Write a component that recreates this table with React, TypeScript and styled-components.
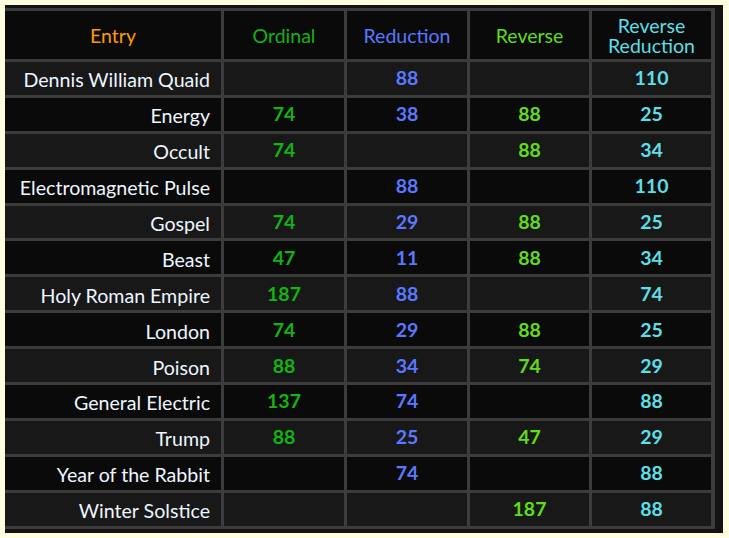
import styled, { createGlobalStyle } from "styled-components";

const GlobalStyle = createGlobalStyle`
  html, body {
    margin: 0;
    padding: 0;
    background-color: #ffffe0;
  }
  body {
    padding: 5px;
    font-family: Lato, "Open Sans", sans-serif;
  }
`;

const Panel = styled.div`
  width: 718px;
  height: 528px;
  box-sizing: border-box;
  background-color: #131313;
  padding: 3px 8px 5px 0;
`;

const Grid = styled.div`
  display: grid;
  grid-template-columns: 216px 120px 120px 119px 119px;
  grid-template-rows: 48px;
  grid-auto-rows: 32.9px;
  gap: 3px;
  padding: 3px 3px 3px 0;
  background-color: #3c3c3c;
`;

const COLORS = ["#ff9a00", "#13b313", "#5a78ff", "#5fdd1c", "#5ddfe6"];

const HeadCell = styled.div<{ $color: string }>`
  display: flex;
  align-items: center;
  justify-content: center;
  padding-top: 2px;
  text-align: center;
  background-color: #0a0a0a;
  color: ${(p) => p.$color};
  font-size: 19.5px;
  line-height: 20px;
`;

const NameCell = styled.div<{ $odd: boolean }>`
  display: flex;
  align-items: center;
  justify-content: flex-end;
  padding: 3px 11px 0 0;
  background-color: ${(p) => (p.$odd ? "#181818" : "#0a0a0a")};
  color: #eef6ff;
  font-size: 19.6px;
`;

const NumCell = styled.div<{ $odd: boolean; $color: string }>`
  display: flex;
  align-items: center;
  justify-content: center;
  padding-bottom: 1px;
  background-color: ${(p) => (p.$odd ? "#181818" : "#0a0a0a")};
  color: ${(p) => p.$color};
  font-size: 19.5px;
  font-weight: 700;
`;

const rows: [string, string, string, string, string][] = [
  ["Dennis William Quaid", "", "88", "", "110"],
  ["Energy", "74", "38", "88", "25"],
  ["Occult", "74", "", "88", "34"],
  ["Electromagnetic Pulse", "", "88", "", "110"],
  ["Gospel", "74", "29", "88", "25"],
  ["Beast", "47", "11", "88", "34"],
  ["Holy Roman Empire", "187", "88", "", "74"],
  ["London", "74", "29", "88", "25"],
  ["Poison", "88", "34", "74", "29"],
  ["General Electric", "137", "74", "", "88"],
  ["Trump", "88", "25", "47", "29"],
  ["Year of the Rabbit", "", "74", "", "88"],
  ["Winter Solstice", "", "", "187", "88"],
];

const headers = ["Entry", "Ordinal", "Reduction", "Reverse", "Reverse\nReduction"];

export default function App() {
  return (
    <>
      <GlobalStyle />
      <Panel>
        <Grid>
          {headers.map((h, i) => (
            <HeadCell key={h} $color={COLORS[i]}>
              <span>
                {h.split("\n").map((line, j) => (
                  <div key={j}>{line}</div>
                ))}
              </span>
            </HeadCell>
          ))}
          {rows.map((r, ri) =>
            r.map((v, ci) =>
              ci === 0 ? (
                <NameCell key={`${ri}-${ci}`} $odd={ri % 2 === 0}>
                  {v}
                </NameCell>
              ) : (
                <NumCell key={`${ri}-${ci}`} $odd={ri % 2 === 0} $color={COLORS[ci]}>
                  {v}
                </NumCell>
              )
            )
          )}
        </Grid>
      </Panel>
    </>
  );
}
